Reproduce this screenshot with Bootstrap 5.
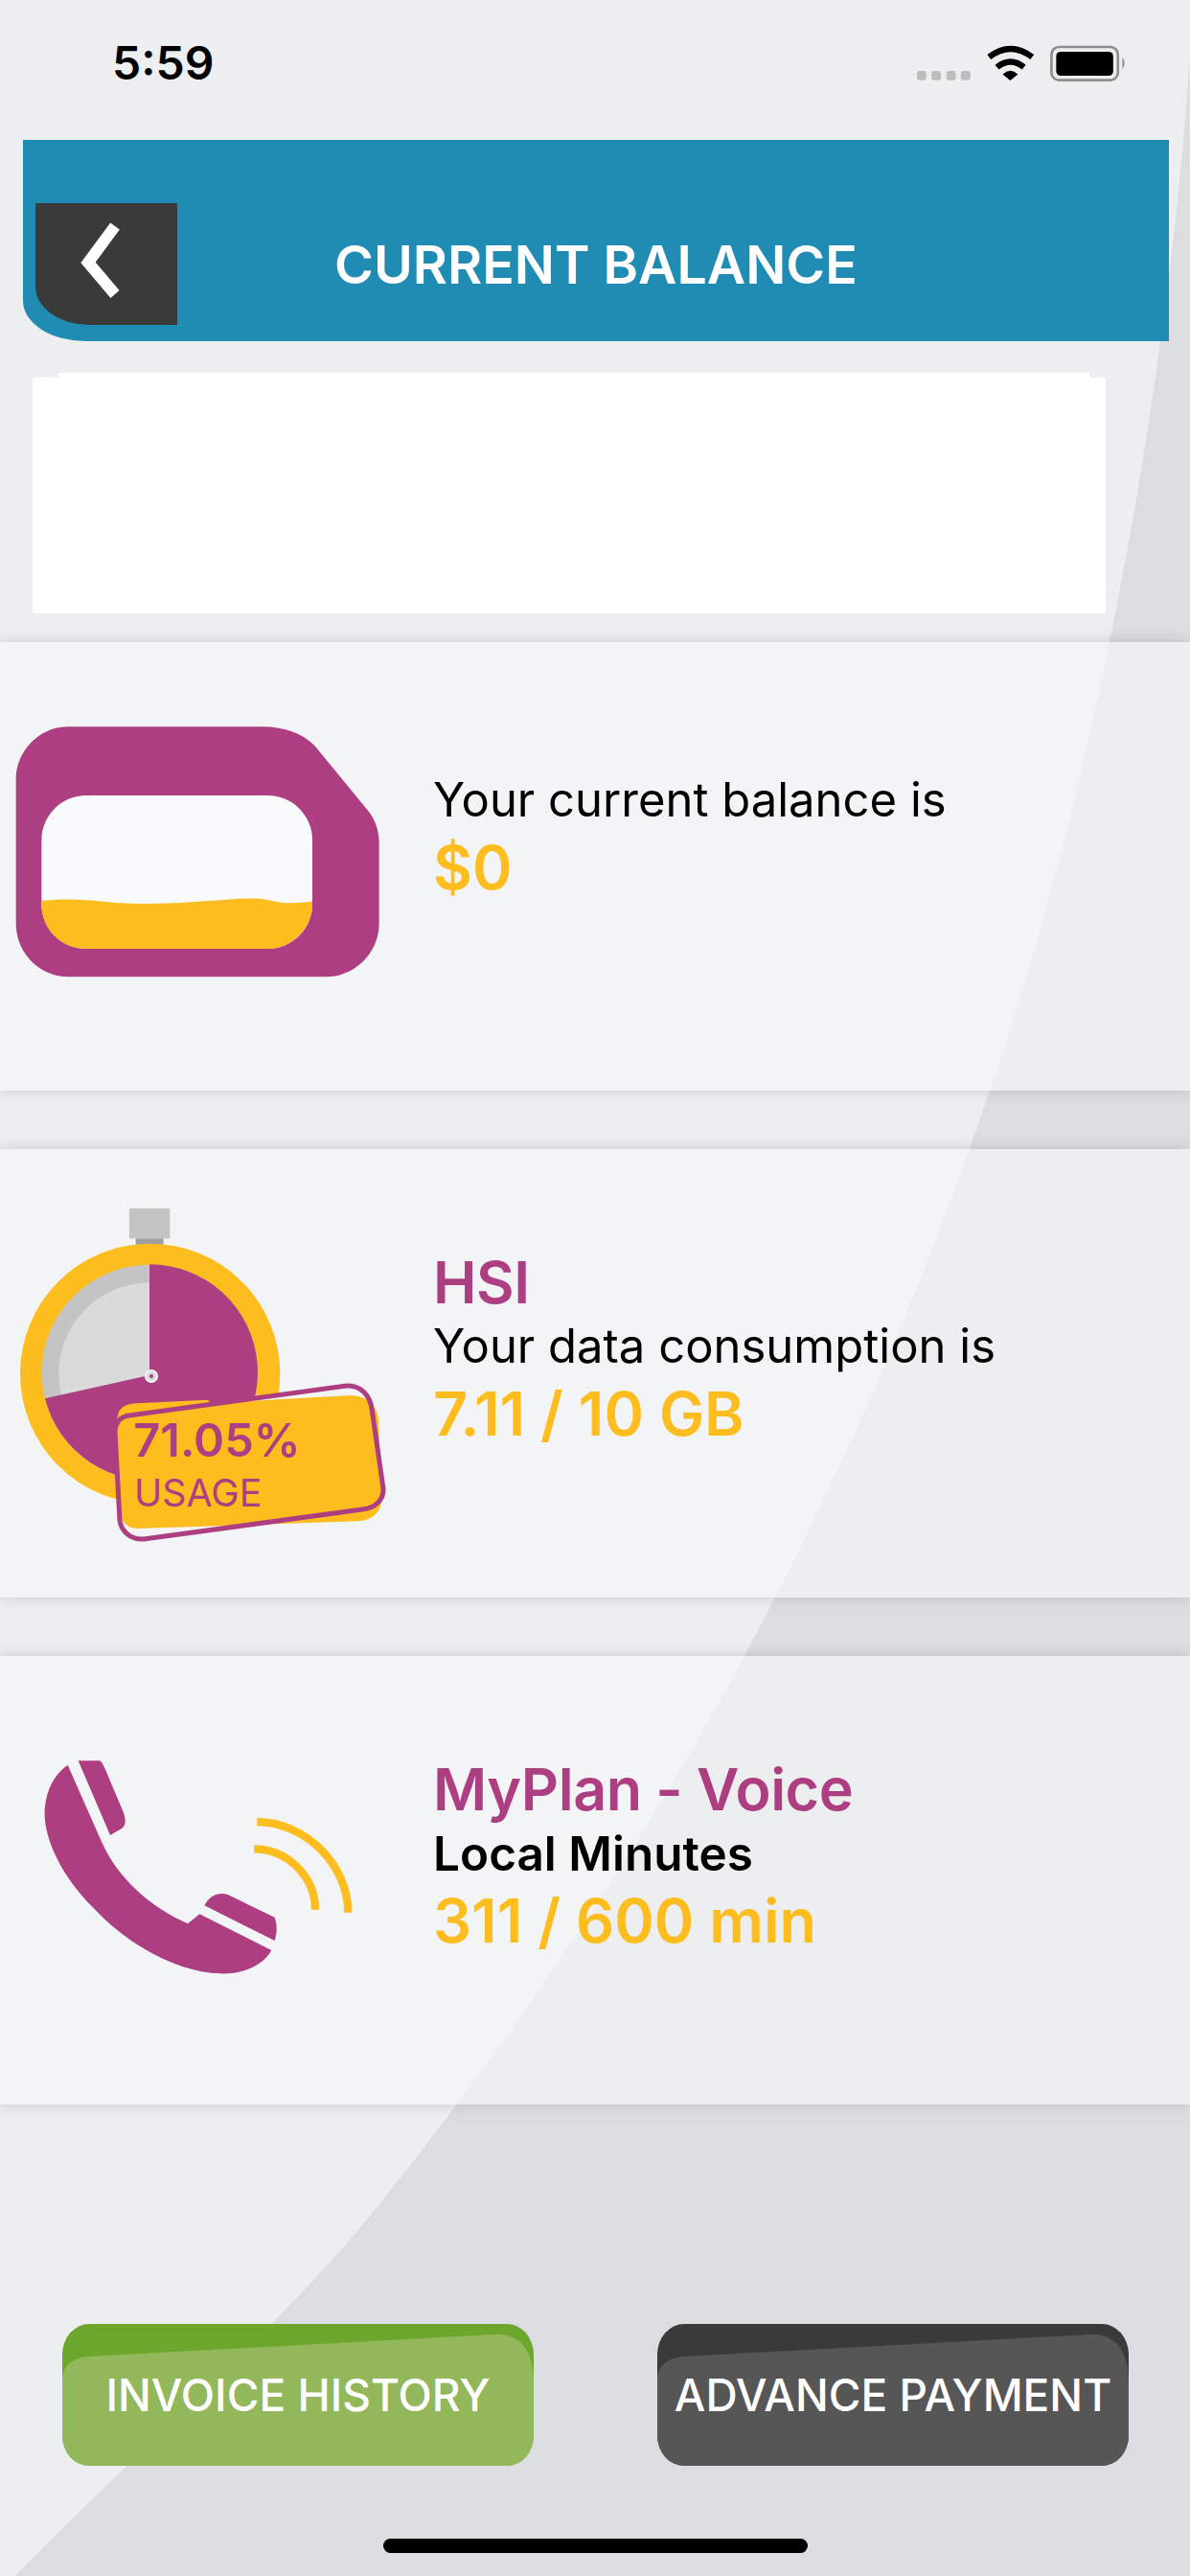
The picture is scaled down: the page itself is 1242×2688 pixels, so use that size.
<!DOCTYPE html>
<html lang="en">

<head>
    <meta charset="UTF-8">
    <title>Current Balance</title>
    <link href="https://cdn.jsdelivr.net/npm/bootstrap@5.3.3/dist/css/bootstrap.min.css" rel="stylesheet">
    <style>
        body {
            width: 1242px;
            height: 2688px;
            overflow: hidden;
            background: #dcdde0;
            font-family: Inter, "Liberation Sans", sans-serif;
        }

        .bg-shape { top: 0; left: 0; }
        .page-wrap { height: 2688px; z-index: 1; }

        .status-row { height: 146px; padding: 47px 64px 0 117px; }
        .status-time { font-size: 48px; font-weight: 600; line-height: 38px; color: #000; }

        .head-bar {
            margin-left: 24px;
            width: 1196px;
            height: 210px;
            padding: 66px 0 17px 13px;
            background: #218cb3;
            border-bottom-left-radius: 65px 42px;
        }
        .back-box {
            width: 148px;
            height: 127px;
            background: #3a3a3a;
            border-bottom-left-radius: 56px 40px;
        }
        .head-title { margin: 0 0 0 164px; font-size: 55.5px; font-weight: 600; color: #fff; line-height: 60px; }

        .blank-nub { margin: 33px 105px 0 61px; height: 5px; background: #fff; }
        .blank-box { margin: 0 88px 0 34px; height: 246px; background: #fff; }

        .stat-list { margin-top: 30px; gap: 61px; }
        .stat-card {
            --bs-card-bg: rgba(246, 247, 249, .65);
            height: 468px;
            box-shadow: 0 0 14px rgba(0, 0, 0, .15);
        }
        .stat-text { padding-top: 103px; }
        .stat-text.two-line { padding-top: 134px; }
        .stat-name { font-size: 61px; font-weight: 600; letter-spacing: -.5px; line-height: 72px; color: #ad3e82; }
        .stat-sub { font-size: 49px; line-height: 62px; color: #000; }
        .stat-sub.heavy { font-weight: 600; font-size: 49.5px; }
        .stat-val { font-size: 63px; font-weight: 600; line-height: 78px; color: #fdbd1f; }

        .pay-row { margin-top: 229px; padding: 0 64px 0 65px; }
        .pay-btn {
            position: relative;
            width: 492px;
            height: 148px;
            padding: 0;
            border: 0;
            border-radius: 28px / 32px;
            overflow: hidden;
            color: #fff;
            font-size: 46px;
            font-weight: 500;
        }
        .pay-btn::before {
            content: "";
            position: absolute;
            inset: 0;
            clip-path: path("M0 60 C0 45 8 36 26 34 L450 11 C475 9 492 25 492 60 V148 H0 Z");
        }
        .pay-btn span { position: relative; }
        .pay-green, .pay-green:hover { background: #6da62c; color: #fff; }
        .pay-green::before { background: #93b75b; }
        .pay-dark, .pay-dark:hover { background: #3a3a3a; color: #fff; }
        .pay-dark::before { background: #575657; }

        .home-bar { width: 443px; height: 15px; margin: 76px auto 0; background: #000; border-radius: 8px; }
    </style>
</head>

<body>
    <svg class="bg-shape position-absolute" width="1242" height="2688" viewBox="0 0 1242 2688">
        <path fill="#edeef0" d="M0 0H1242V60C1215 450 1130 860 1033 1138C900 1528 708 1910 396 2300C292 2430 120 2580 16 2688H0Z" />
    </svg>

    <div class="page-wrap position-relative d-flex flex-column">
        <div class="status-row d-flex justify-content-between align-items-start">
            <span class="status-time">5:59</span>
            <svg width="222" height="38" viewBox="174 80 666 115">
                <g fill="#bdbdbd">
                    <rect x="174" y="162" width="30" height="29" rx="9" />
                    <rect x="220" y="162" width="30" height="29" rx="9" />
                    <rect x="267" y="162" width="30" height="29" rx="9" />
                    <rect x="313" y="162" width="30" height="29" rx="9" />
                </g>
                <g fill="none" stroke="#000" stroke-width="19">
                    <path d="M402 118Q470 66 538 118" />
                    <path d="M427 150Q470 116 512 150" />
                </g>
                <path d="M445 172Q469 150 493 172L469 192Z" />
                <rect x="599" y="86" width="210" height="105" rx="24" fill="none" stroke="#8e8e8e" stroke-width="8" />
                <rect x="614" y="101" width="180" height="76" rx="14" />
                <path d="M823 118Q836 136 823 158Z" fill="#8e8e8e" />
            </svg>
        </div>

        <div class="head-bar d-flex align-items-center">
            <div class="back-box flex-shrink-0">
                <svg width="148" height="127" viewBox="37 212 148 127">
                    <polyline points="120,236 92,274 120,307" fill="none" stroke="#fff" stroke-width="12" />
                </svg>
            </div>
            <h1 class="head-title">CURRENT BALANCE</h1>
        </div>

        <div class="blank-nub"></div>
        <div class="blank-box"></div>

        <div class="stat-list d-flex flex-column">
            <div class="card flex-row border-0 rounded-0 stat-card">
                <svg class="flex-shrink-0" width="452" height="468" viewBox="0 -30 1356 1404">
                    <path fill="#ad3e82" d="M210 235H820C890 235 950 255 990 300L1150 495C1175 525 1187 560 1187 600V850C1187 945 1110 1018 1020 1018H215C125 1018 50 945 50 850V400C50 310 125 235 210 235Z" />
                    <rect x="130" y="450" width="848" height="480" rx="140" fill="#f9fafc" />
                    <path fill="#fdbd1f" d="M130 780C200 772 260 775 330 783C420 792 500 790 600 784C680 780 760 770 810 773C850 777 870 788 920 787L978 782V790C978 870 910 930 840 930H270C190 930 130 870 130 790Z" />
                </svg>
                <div class="stat-text two-line">
                    <div class="stat-sub">Your current balance is</div>
                    <div class="stat-val">$0</div>
                </div>
            </div>

            <div class="card flex-row border-0 rounded-0 stat-card">
                <svg class="flex-shrink-0" width="452" height="468" viewBox="0 -3 1356 1404">
                    <rect x="405" y="183" width="127" height="94" fill="#c4c4c4" />
                    <rect x="425" y="277" width="87" height="20" fill="#a0a0a0" />
                    <circle cx="470" cy="700" r="407" fill="#fdbd1f" />
                    <circle cx="469" cy="697" r="338" fill="#c4c4c4" />
                    <circle cx="469" cy="700" r="285" fill="#dadada" />
                    <path fill="#ad3e82" d="M468 705V358A338 338 0 1 1 141 778Z" />
                    <circle cx="474" cy="708" r="18" fill="#d8d8d8" stroke="#f3f4f6" stroke-width="6" />
                    <circle cx="474" cy="708" r="6" fill="#ad3e82" />
                    <path fill="#f3f4f6" d="M360 880C362 850 380 832 410 830L1085 738C1130 735 1160 770 1165 815L1200 1060C1202 1095 1175 1120 1135 1125L450 1218C410 1220 380 1195 375 1160Z" />
                    <path fill="#fdbd1f" d="M370 825C380 800 400 795 430 793L650 782L660 792L1100 768C1150 770 1180 800 1185 840L1195 1090C1195 1140 1160 1160 1120 1162L430 1185C395 1185 375 1160 372 1120L360 880Z" />
                    <path fill="none" stroke="#ad3e82" stroke-width="15" d="M360 880C362 850 380 832 410 830L1085 738C1130 735 1160 770 1165 815L1200 1060C1202 1095 1175 1120 1135 1125L450 1218C410 1220 380 1195 375 1160Z" />
                    <text x="418" y="960" font-size="146" font-weight="600" fill="#ad3e82">71.05%</text>
                    <text x="420" y="1115" font-size="118" fill="#ad3e82">USAGE</text>
                </svg>
                <div class="stat-text">
                    <div class="stat-name">HSI</div>
                    <div class="stat-sub">Your data consumption is</div>
                    <div class="stat-val">7.11 / 10 GB</div>
                </div>
            </div>

            <div class="card flex-row border-0 rounded-0 stat-card">
                <svg class="flex-shrink-0" width="452" height="468" viewBox="0 -96 1356 1404">
                    <g fill="#ad3e82">
                        <path d="M212 245L320 490C370 600 470 690 588 742L625 712L850 825C820 880 750 900 690 898C560 895 400 810 290 690C190 590 135 470 140 385C145 320 170 275 212 245Z" />
                        <path d="M245 232H310C318 232 322 245 328 255L385 390C395 415 395 435 380 445L345 465Z" />
                        <path d="M640 685C655 655 685 640 715 652L860 722C868 745 868 770 860 795Z" />
                    </g>
                    <g fill="none" stroke="#fdbd1f" stroke-width="25">
                        <path d="M805 423C960 425 1090 560 1090 707" />
                        <path d="M795 508C900 508 987 595 987 698" />
                    </g>
                </svg>
                <div class="stat-text">
                    <div class="stat-name">MyPlan - Voice</div>
                    <div class="stat-sub heavy">Local Minutes</div>
                    <div class="stat-val">311 / 600 min</div>
                </div>
            </div>
        </div>

        <div class="pay-row d-flex justify-content-between">
            <button type="button" class="btn pay-btn pay-green"><span>INVOICE HISTORY</span></button>
            <button type="button" class="btn pay-btn pay-dark"><span>ADVANCE PAYMENT</span></button>
        </div>

        <div class="home-bar"></div>
    </div>

    <script src="https://cdn.jsdelivr.net/npm/bootstrap@5.3.3/dist/js/bootstrap.bundle.min.js"></script>
</body>

</html>
